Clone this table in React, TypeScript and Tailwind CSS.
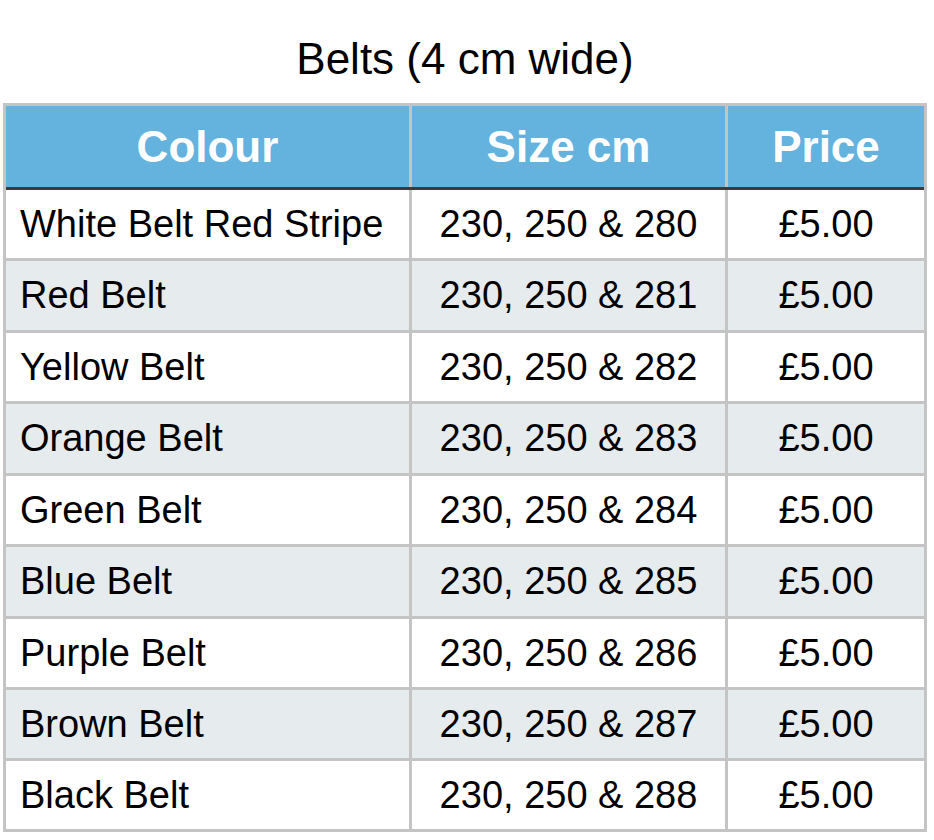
import React from "react";

const rows = [
  ["White Belt Red Stripe", "230, 250 & 280", "h-[68px]"],
  ["Red Belt", "230, 250 & 281", "h-[69px]"],
  ["Yellow Belt", "230, 250 & 282", "h-[68px]"],
  ["Orange Belt", "230, 250 & 283", "h-[69px]"],
  ["Green Belt", "230, 250 & 284", "h-[68px]"],
  ["Blue Belt", "230, 250 & 285", "h-[69px]"],
  ["Purple Belt", "230, 250 & 286", "h-[68px]"],
  ["Brown Belt", "230, 250 & 287", "h-[68px]"],
  ["Black Belt", "230, 250 & 288", "h-[68px]"],
];

export default function App() {
  return (
    <div
      className="w-[934px] h-[840px] bg-white text-black"
      style={{ fontFamily: '"Liberation Sans", Arial, Helvetica, sans-serif' }}
    >
      <div className="h-[103px] pt-[26px] pl-[3px] w-[927px] text-center text-[44px] leading-normal">
        Belts (4 cm wide)
      </div>
      <div className="ml-[3px] w-[924px] border-[3px] border-[#c4c4c4]">
        <div className="flex h-[84px] bg-[#64b2de] border-b-[3px] border-[#3c3c3c] text-white font-bold text-[44px]">
          <div className="w-[406px] shrink-0 flex items-center justify-center border-r-[3px] border-[#c4c4c4]">
            Colour
          </div>
          <div className="w-[316px] shrink-0 flex items-center justify-center border-r-[3px] border-[#c4c4c4]">
            Size cm
          </div>
          <div className="flex-1 flex items-center justify-center">Price</div>
        </div>
        {rows.map(([name, size, h], i) => (
          <div
            key={name}
            className={`flex text-[38px] ${h} box-content ${i > 0 ? "border-t-[3px] border-[#c4c4c4]" : ""} ${i % 2 === 1 ? "bg-[#e6ebee]" : "bg-white"}`}
          >
            <div className="w-[406px] shrink-0 flex items-center pl-[14px] border-r-[3px] border-[#c4c4c4]">
              {name}
            </div>
            <div className="w-[316px] shrink-0 flex items-center justify-center border-r-[3px] border-[#c4c4c4]">
              {size}
            </div>
            <div className="flex-1 flex items-center justify-center">£5.00</div>
          </div>
        ))}
      </div>
    </div>
  );
}
